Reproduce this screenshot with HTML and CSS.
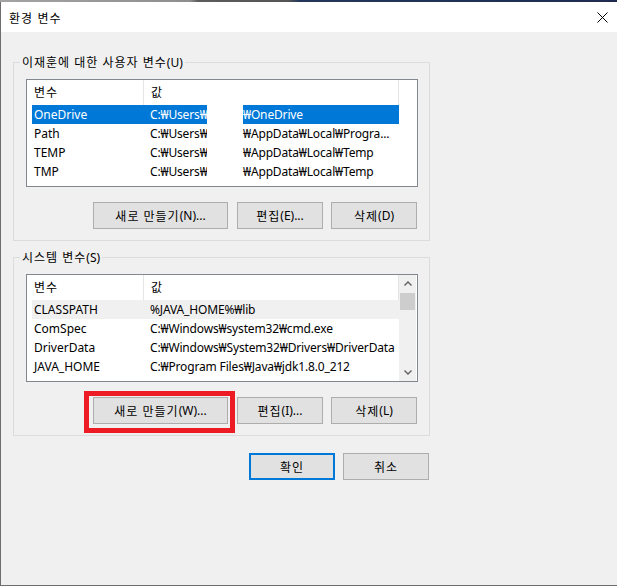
FILE: index.html
```html
<!DOCTYPE html>
<html lang="ko">
<head>
<meta charset="utf-8">
<title>환경 변수</title>
<link rel="stylesheet" href="styles.css">
</head>
<body>
<div class="strip"></div>
<div class="window">
  <div class="titlebar">
    <span class="title ko">환경 변수</span>
    <svg class="close" width="11" height="11" viewBox="0 0 11 11"><path d="M0.5 0.5 L10.5 10.5 M10.5 0.5 L0.5 10.5" stroke="#000" stroke-width="1" fill="none"/></svg>
  </div>
  <div class="client">
    <section class="group">
      <div class="legend"><span class="ko">이재훈에 대한 사용자 변수</span>(U)</div>
      <div class="list">
        <div class="lv-main">
          <div class="lv-header"><div class="hcol hc1 ko">변수</div><div class="hcol hc2 ko">값</div></div>
          <div class="row sel"><div class="cell-name">OneDrive</div><div class="cell-val"><span class="v1">C:₩Users₩</span><span class="mask"></span><span>₩OneDrive</span></div></div>
          <div class="row"><div class="cell-name">Path</div><div class="cell-val"><span class="v1">C:₩Users₩</span><span class="mask"></span><span>₩AppData₩Local₩Progra...</span></div></div>
          <div class="row"><div class="cell-name">TEMP</div><div class="cell-val"><span class="v1">C:₩Users₩</span><span class="mask"></span><span>₩AppData₩Local₩Temp</span></div></div>
          <div class="row"><div class="cell-name">TMP</div><div class="cell-val"><span class="v1">C:₩Users₩</span><span class="mask"></span><span>₩AppData₩Local₩Temp</span></div></div>
        </div>
      </div>
      <div class="btns">
        <button class="btn btn-new"><span class="ko">새로 만들기</span>(N)...</button>
        <button class="btn btn-edit"><span class="ko">편집</span>(E)...</button>
        <button class="btn btn-del"><span class="ko">삭제</span>(D)</button>
      </div>
    </section>
    <section class="group">
      <div class="legend"><span class="ko">시스템 변수</span>(S)</div>
      <div class="list">
        <div class="lv-main">
          <div class="lv-header"><div class="hcol hc1 ko">변수</div><div class="hcol hc2 ko">값</div></div>
          <div class="row hl"><div class="cell-name">CLASSPATH</div><div class="cell-val">%JAVA_HOME%₩lib</div></div>
          <div class="row"><div class="cell-name">ComSpec</div><div class="cell-val">C:₩Windows₩system32₩cmd.exe</div></div>
          <div class="row"><div class="cell-name">DriverData</div><div class="cell-val">C:₩Windows₩System32₩Drivers₩DriverData</div></div>
          <div class="row"><div class="cell-name">JAVA_HOME</div><div class="cell-val">C:₩Program Files₩Java₩jdk1.8.0_212</div></div>
        </div>
        <div class="scrollbar">
          <div class="sb-btn"><svg width="8" height="5" viewBox="0 0 8 5"><polyline points="0.5,4.5 4,1 7.5,4.5" fill="none" stroke="#606060" stroke-width="1.4"/></svg></div>
          <div class="sb-thumb"></div>
          <div class="sb-track"></div>
          <div class="sb-btn"><svg width="8" height="5" viewBox="0 0 8 5"><polyline points="0.5,0.5 4,4 7.5,0.5" fill="none" stroke="#606060" stroke-width="1.4"/></svg></div>
        </div>
      </div>
      <div class="btns">
        <button class="btn btn-new"><span class="ko">새로 만들기</span>(W)...</button>
        <button class="btn btn-edit"><span class="ko">편집</span>(I)...</button>
        <button class="btn btn-del"><span class="ko">삭제</span>(L)</button>
      </div>
    </section>
    <div class="dlg-btns">
      <button class="btn btn-ok ko">확인</button>
      <button class="btn btn-cancel ko">취소</button>
    </div>
  </div>
</div>
<div class="annot"></div>
</body>
</html>
```
FILE: styles.css
```css
* { box-sizing: border-box; }
body {
  margin: 0;
  width: 617px;
  height: 586px;
  overflow: hidden;
  position: relative;
  background: #f0f0f0;
  color: #000;
  font-family: "Noto Sans", "Noto Sans CJK KR", sans-serif;
  font-size: 12px;
}
.ko { letter-spacing: 1px; }
.strip {
  height: 2px;
  background: linear-gradient(to right, #a3a3a3 0, #8e8e8e 190px, #5c5c5c 198px, #555 288px, #24365c 300px, #1d2c4e 100%);
}
.window {
  height: 584px;
  border-left: 1px solid #6d6d6d;
  border-bottom: 1px solid #6d6d6d;
  background: #f0f0f0;
  display: flex;
  flex-direction: column;
}
.titlebar {
  height: 30px;
  flex: none;
  background: #fff;
  display: flex;
  align-items: center;
  justify-content: space-between;
  padding: 0 9px 0 8px;
}
.title { font-family: "Noto Sans CJK KR", sans-serif; font-size: 12px; }
.close { display: block; }
.client { flex: 1; padding: 30px 0 0 12px; }
.group {
  width: 417px;
  border: 1px solid #dcdcdc;
  padding: 0 11px 11px 12px;
}
.group + .group { margin-top: 16px; }
.legend {
  width: fit-content;
  height: 15px;
  line-height: 15px;
  margin: -8px 0 0 -6px;
  padding: 0 2px;
  background: #f0f0f0;
  white-space: nowrap;
}
.list {
  width: 392px;
  height: 108px;
  margin-top: 9px;
  border: 1px solid #828790;
  background: #fff;
  display: flex;
}
.lv-main { width: 372px; flex: none; }
.lv-header { display: flex; height: 25px; }
.hcol { line-height: 25px; padding-left: 7px; border-right: 1px solid #e5e5e5; }
.hc1 { width: 117px; }
.hc2 { width: 255px; }
.row {
  display: flex;
  height: 19px;
  line-height: 19px;
  margin-left: 5px;
  width: 367px;
  white-space: nowrap;
  overflow: hidden;
}
.row.sel { background: #0078d7; color: #fff; }
.row.hl { background: #f0f0f0; }
.cell-name { width: 112px; flex: none; padding-left: 2px; }
.cell-val { flex: 1; padding-left: 6px; display: flex; overflow: hidden; letter-spacing: -0.15px; }
.v1 { width: 57px; flex: none; }
.mask { width: 36px; flex: none; background: #fff; }
.scrollbar {
  width: 17px;
  flex: none;
  background: #f0f0f0;
  display: flex;
  flex-direction: column;
}
.sb-btn { height: 17px; flex: none; display: flex; align-items: center; justify-content: center; }
.sb-btn svg { display: block; }
.sb-thumb { height: 17px; flex: none; margin: 1px 1px 0; background: #cdcdcd; }
.sb-track { flex: 1; }
.btns { display: flex; justify-content: flex-end; margin: 15px 1px 0 0; }
.btn {
  height: 27px;
  padding: 0;
  border: 1px solid #adadad;
  background: #e1e1e1;
  color: #000;
  font: inherit;
  display: flex;
  align-items: center;
  justify-content: center;
  white-space: nowrap;
}
.btn-new { width: 135px; margin-right: 9px; }
.btn-edit { width: 86px; margin-right: 8px; }
.btn-del { width: 86px; }
.dlg-btns {
  width: 416px;
  display: flex;
  justify-content: flex-end;
  gap: 8px;
  margin-top: 17px;
}
.btn-ok { width: 86px; border: 2px solid #0078d7; }
.btn-cancel { width: 86px; }
.annot {
  position: absolute;
  left: 84px;
  top: 391px;
  width: 151px;
  height: 42px;
  border: 5px solid #ed1c24;
}
```
